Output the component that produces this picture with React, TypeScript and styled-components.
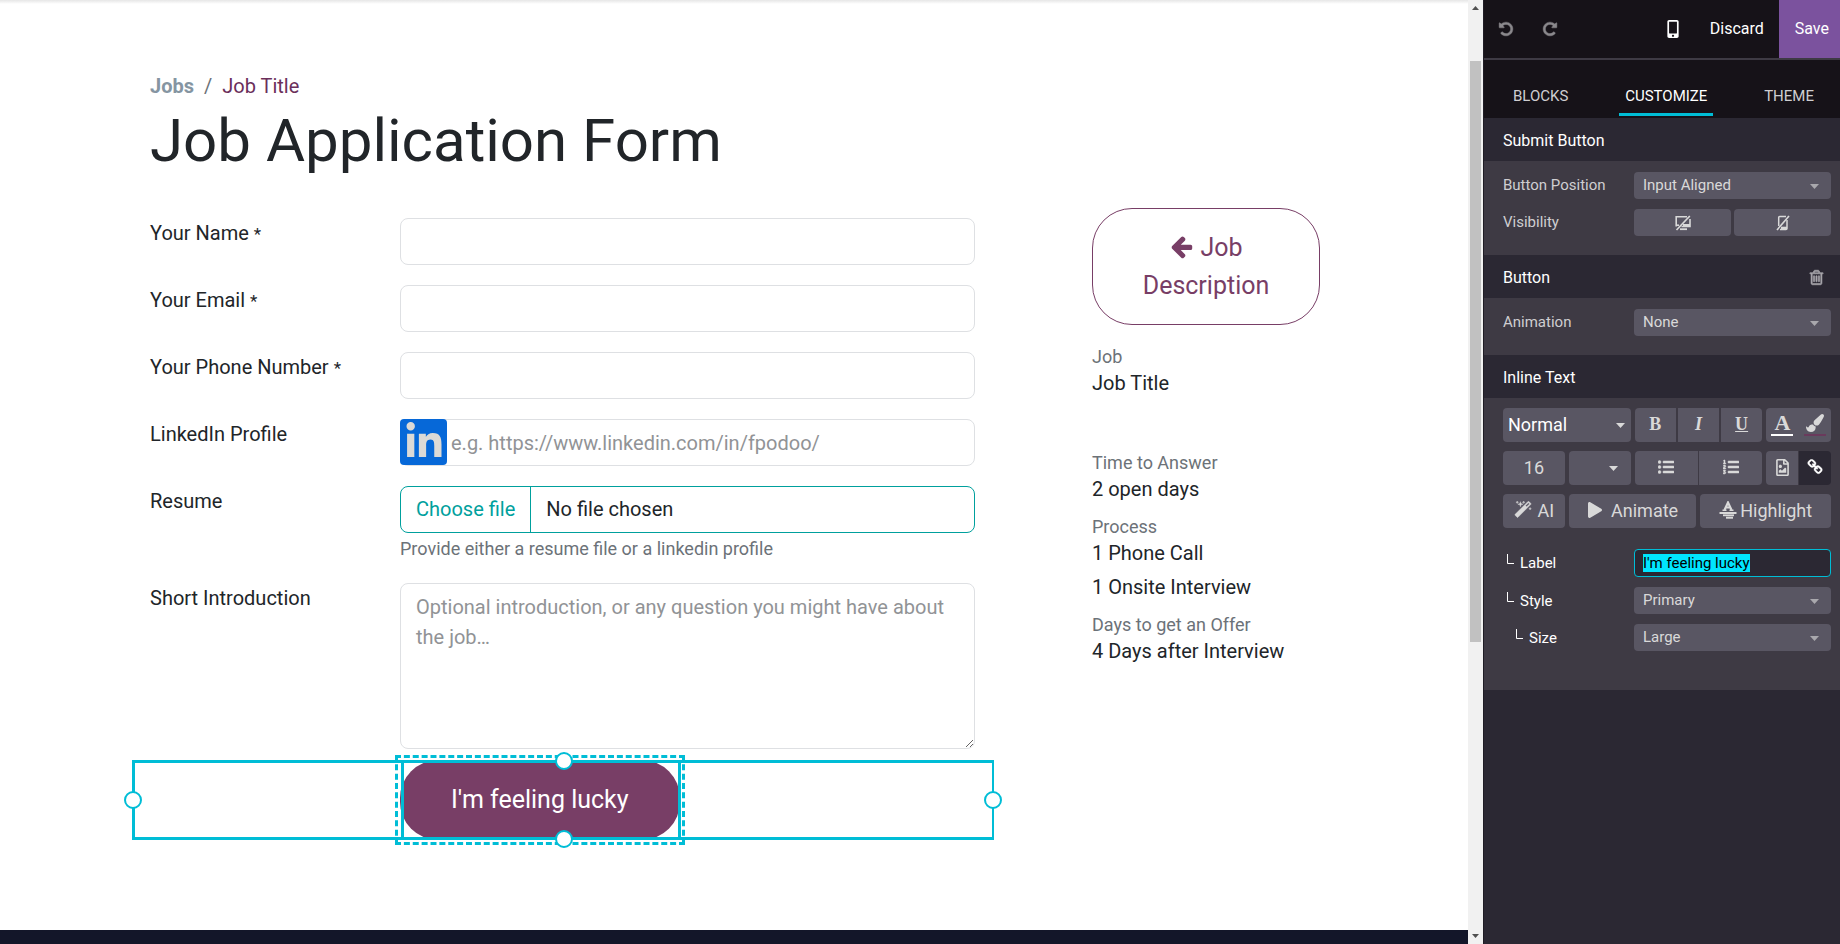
import React, { useEffect, useRef } from "react";
import styled, { createGlobalStyle, css } from "styled-components";
import {
  FaLinkedinIn,
  FaListOl,
  FaListUl,
  FaMobileAlt,
  FaPlay,
  FaRegFileImage,
} from "react-icons/fa";

const c = {
  accent: "#00bdd6",
  brand: "#783e66",
  teal: "#00a09d",
  ink: "#212529",
  muted: "#6c7278",
  border: "#dee0e3",
  dark: "#161218",
  head: "#2b2833",
  body: "#3e3a44",
  control: "#595663",
  light: "#d9d9d9",
};

const GlobalStyle = createGlobalStyle`
  *, *::before, *::after { box-sizing: border-box; }
  body { margin: 0; font-family: Roboto, sans-serif; color: ${c.ink}; background: #fff; }
  button, input, select, textarea { font-family: inherit; margin: 0; }
  button { cursor: pointer; }
  h1, h2, p, dl, dd, dt, ol { margin: 0; padding: 0; }
`;

const Layout = styled.div`
  display: flex;
  min-height: 100vh;
`;

/* ---------- Website page ---------- */

const Page = styled.main`
  flex: 1;
  min-width: 0;
  display: flex;
  flex-direction: column;
  background: linear-gradient(#e6e6e6, #fff) top / 100% 4px no-repeat #fff;
`;

const PageContent = styled.div`
  padding: 71px 148px 90px 150px;
`;

const PageFooter = styled.footer`
  flex: 1;
  min-height: 14px;
  background: #131629;
`;

const Breadcrumb = styled.ol`
  display: flex;
  gap: 10px;
  list-style: none;
  font-size: 20px;
  line-height: 30px;
  color: ${c.muted};
`;

const Crumb = styled.a<{ $strong?: boolean }>`
  color: ${(p) => (p.$strong ? "#8595a2" : "#6b2f5b")};
  font-weight: ${(p) => (p.$strong ? 700 : 400)};
  text-decoration: none;
`;

const Title = styled.h1`
  margin-top: 5px;
  font-size: 60px;
  line-height: 70px;
  font-weight: 400;
`;

const Columns = styled.div`
  display: grid;
  grid-template-columns: minmax(0, 1fr) 228px;
  column-gap: 117px;
  margin-top: 32px;
`;

const Form = styled.form`
  display: flex;
  flex-direction: column;
  gap: 20px;
  padding-top: 10px;
`;

const FormRow = styled.div`
  display: grid;
  grid-template-columns: 250px minmax(0, 1fr);
  align-items: start;
`;

const FieldLabel = styled.label`
  font-size: 20px;
  line-height: 30px;
`;

const Mark = styled.span`
  font-size: 17px;
`;

const fieldBox = css`
  display: block;
  width: 100%;
  border: 1px solid ${c.border};
  border-radius: 8px;
  background: #fff;
  font-size: 20px;
  line-height: 30px;
  color: ${c.ink};
  outline: none;
  &::placeholder {
    color: #919396;
    opacity: 1;
  }
`;

const TextField = styled.input<{ $badge?: boolean }>`
  ${fieldBox}
  height: 47px;
  padding: 0 15px 0 ${(p) => (p.$badge ? 50 : 15)}px;
`;

const TextArea = styled.textarea`
  ${fieldBox}
  height: 166px;
  padding: 8px 15px;
  resize: vertical;
`;

const BadgeField = styled.div`
  position: relative;
`;

const LinkedInBadge = styled.span`
  position: absolute;
  top: 0;
  left: 0;
  display: grid;
  place-items: center;
  width: 47px;
  height: 46px;
  border-radius: 4px;
  background: #0668d8;
  color: #dcdad6;
`;

const FilePicker = styled.label`
  position: relative;
  display: flex;
  height: 47px;
  border: 1px solid ${c.teal};
  border-radius: 8px;
  font-size: 20px;
  line-height: 45px;
`;

const FileInput = styled.input`
  position: absolute;
  inset: 0;
  width: 100%;
  opacity: 0;
`;

const FileAction = styled.span`
  padding: 0 15px;
  border-right: 1px solid ${c.teal};
  color: ${c.teal};
`;

const FileName = styled.span`
  padding-left: 15px;
`;

const HelpText = styled.p`
  margin-top: 2px;
  font-size: 18px;
  line-height: 28px;
  color: ${c.muted};
`;

const SubmitRow = styled.div`
  position: relative;
  height: 80px;
  margin-top: -9px;
  padding-left: 250px;
`;

const SubmitWrap = styled.div`
  position: relative;
  display: inline-block;
`;

const SubmitButton = styled.button`
  display: block;
  height: 80px;
  padding: 0 51px;
  border: 0;
  border-radius: 38px;
  background: ${c.brand};
  color: #fff;
  font-size: 25px;
  line-height: 38px;
`;

const RowSelection = styled.div`
  position: absolute;
  inset: 0 -19px 0 -18px;
  border: 3px solid ${c.accent};
  border-right-width: 2px;
  pointer-events: none;
`;

const ButtonSelection = styled.div`
  position: absolute;
  inset: 0 -1px 0 1px;
  border: 3px solid ${c.accent};
  pointer-events: none;
`;

const DashedSelection = styled.div`
  position: absolute;
  inset: -5px;
  border: 3px dashed ${c.accent};
  pointer-events: none;
`;

type Side = "left" | "right" | "top" | "bottom";

const Handle = styled.span<{ $side: Side }>`
  position: absolute;
  width: 18px;
  height: 18px;
  border: 2px solid ${c.accent};
  border-radius: 50%;
  background: #fff;
  transform: translate(-50%, -50%);
  top: ${(p) => (p.$side === "top" ? "-2px" : p.$side === "bottom" ? "calc(100% + 2px)" : "50%")};
  left: ${(p) => (p.$side === "left" ? "-2px" : p.$side === "right" ? "calc(100% + 1px)" : "50%")};
`;

const JobAside = styled.aside`
  font-size: 20px;
`;

const DescriptionLink = styled.a`
  display: block;
  padding: 20px 40px 19px;
  border: 1px solid ${c.brand};
  border-radius: 40px;
  color: ${c.brand};
  font-size: 25px;
  line-height: 38px;
  text-align: center;
  text-decoration: none;
  svg {
    margin-right: 6px;
    vertical-align: -3px;
  }
`;

const Facts = styled.dl`
  margin-top: 20px;
`;

const Fact = styled.div<{ $space?: number }>`
  margin-bottom: ${(p) => p.$space ?? 12}px;
`;

const FactName = styled.dt`
  font-size: 18px;
  line-height: 24px;
  color: ${c.muted};
`;

const FactValue = styled.dd`
  line-height: 28px;
  & + & {
    margin-top: 6px;
  }
`;

/* ---------- Scroll bar ---------- */

const ScrollTrack = styled.div`
  display: flex;
  flex-direction: column;
  align-items: center;
  width: 15px;
  background: #f1f1f1;
`;

const ScrollArrow = styled.svg`
  display: block;
  width: 7px;
  height: 4px;
  margin: 6px 0;
`;

const ScrollGap = styled.div<{ $grow: number }>`
  flex: ${(p) => p.$grow} 0 0;
`;

const ScrollThumb = styled.div`
  flex: 581 0 0;
  width: 11px;
  background: #c1c1c1;
`;

/* ---------- Editor panel ---------- */

const Panel = styled.aside`
  width: 357px;
  border-left: 1px solid #1f1c25;
  background: ${c.head};
  color: ${c.light};
`;

const TopBar = styled.div`
  display: flex;
  align-items: stretch;
  height: 60px;
  border-bottom: 2px solid ${c.body};
  background: ${c.dark};
`;

const IconButton = styled.button<{ $dim?: boolean }>`
  display: grid;
  place-items: center;
  width: 44px;
  padding: 0;
  border: 0;
  background: none;
  color: ${(p) => (p.$dim ? "#8a888c" : "#fff")};
`;

const Spacer = styled.div`
  flex: 1;
`;

const BarButton = styled.button<{ $primary?: boolean }>`
  padding: 0 ${(p) => (p.$primary ? 11 : 15)}px 0 ${(p) => (p.$primary ? 16 : 15)}px;
  border: 0;
  background: ${(p) => (p.$primary ? "#7b529e" : "transparent")};
  color: #fff;
  font-size: 16px;
  line-height: 24px;
`;

const Tabs = styled.div`
  display: flex;
  justify-content: space-between;
  align-items: flex-end;
  height: 58px;
  padding: 0 20px 2px 23px;
  background: ${c.dark};
`;

const Tab = styled.button<{ $active?: boolean }>`
  height: 42px;
  padding: 5px 6px 0;
  border: 0;
  border-bottom: 3px solid ${(p) => (p.$active ? c.accent : "transparent")};
  background: none;
  color: ${(p) => (p.$active ? "#fff" : "#cfced1")};
  font-size: 15px;
`;

const SectionHead = styled.h2`
  display: flex;
  align-items: center;
  justify-content: space-between;
  height: 43px;
  padding: 1px 10px 0 19px;
  background: ${c.head};
  color: #fff;
  font-size: 16px;
  font-weight: 400;
`;

const TrashButton = styled.button`
  display: grid;
  place-items: center;
  width: 28px;
  height: 28px;
  padding: 0;
  border: 0;
  background: none;
  color: #aaa8ae;
`;

const SectionBody = styled.div<{ $last?: boolean }>`
  display: flex;
  flex-direction: column;
  gap: 10px;
  padding: ${(p) => (p.$last ? "10px 9px 39px 19px" : "11px 9px 19px 19px")};
  background: ${c.body};
`;

const OptionRow = styled.div`
  display: grid;
  grid-template-columns: 131px minmax(0, 1fr);
  align-items: center;
`;

const OptionLabel = styled.label<{ $level?: number }>`
  display: flex;
  font-size: 15px;
  line-height: 20px;
  padding-left: ${(p) => (p.$level ? p.$level * 9 - 5 : 0)}px;
  padding-bottom: ${(p) => (p.$level ? 0 : 2)}px;
  color: ${(p) => (p.$level ? "#fff" : "#cfced1")};
  svg {
    margin: 1px 6px 0 0;
  }
`;

const SelectBox = styled.div<{ $right?: number }>`
  position: relative;
  svg {
    position: absolute;
    top: calc(50% - 2px);
    right: ${(p) => p.$right ?? 12}px;
    pointer-events: none;
  }
`;

const Select = styled.select<{ $tool?: boolean }>`
  display: block;
  width: 100%;
  height: ${(p) => (p.$tool ? 34 : 27)}px;
  padding: 0 ${(p) => (p.$tool ? 5 : 9)}px 2px;
  border: 0;
  border-radius: 4px;
  appearance: none;
  background: ${c.control};
  color: ${(p) => (p.$tool ? "#fff" : c.light)};
  font-size: ${(p) => (p.$tool ? 18 : 15)}px;
  outline: none;
`;

const OptionInput = styled.input`
  display: block;
  width: 100%;
  height: 28px;
  padding: 0 8px;
  border: 1px solid ${c.accent};
  border-radius: 4px;
  background: ${c.head};
  color: #fff;
  font-size: 15px;
  outline: none;
  &::selection {
    background: #00e5ff;
    color: #000;
  }
`;

const SplitPair = styled.div`
  display: grid;
  grid-template-columns: 1fr 1fr;
  gap: 3px;
`;

const ToggleButton = styled.button`
  display: grid;
  place-items: center;
  height: 27px;
  padding: 0;
  border: 0;
  border-radius: 4px;
  background: ${c.control};
  color: ${c.light};
`;

const Toolbar = styled.div`
  display: flex;
  flex-direction: column;
  gap: 9px;
  margin-bottom: 11px;
`;

const ToolRow = styled.div<{ $cols: string }>`
  display: grid;
  grid-template-columns: ${(p) => p.$cols};
  gap: 4px;
`;

const ToolGroup = styled.div<{ $gap: number }>`
  display: flex;
  gap: ${(p) => p.$gap}px;
  border-radius: 4px;
  overflow: hidden;
`;

const ToolButton = styled.button<{ $active?: boolean; $gap?: number }>`
  flex: 1;
  display: flex;
  align-items: center;
  justify-content: center;
  gap: ${(p) => p.$gap ?? 0}px;
  min-width: 0;
  height: 34px;
  padding: 0 0 2px;
  border: 0;
  background: ${(p) => (p.$active ? c.head : c.control)};
  color: ${(p) => (p.$active ? "#fff" : c.light)};
  font-size: 18px;
`;

const SoloButton = styled(ToolButton)`
  border-radius: 4px;
`;

const SizeField = styled.input`
  width: 100%;
  height: 34px;
  padding: 0 0 2px;
  border: 0;
  border-radius: 4px;
  background: ${c.control};
  color: ${c.light};
  font-size: 18px;
  text-align: center;
  outline: none;
`;

const Letter = styled.span<{ $italic?: boolean; $underline?: boolean; $large?: boolean }>`
  font-family: "Liberation Serif", serif;
  font-size: ${(p) => (p.$large ? 22 : 18)}px;
  line-height: 20px;
  font-weight: 700;
  font-style: ${(p) => (p.$italic ? "italic" : "normal")};
  text-decoration: ${(p) => (p.$underline ? "underline" : "none")};
`;

const Swatch = styled.span<{ $color: string }>`
  display: grid;
  place-items: center;
  width: 22px;
  height: 24px;
  border-bottom: 2px solid ${(p) => p.$color};
`;

/* ---------- Small drawings ---------- */

const glyphs = {
  arrowLeft:
    "M1664 896v128q0 53-32.500 90.500t-84.500 37.500h-704l293 294q38 36 38 90t-38 90l-75 76q-37 37-90 37-52 0-91-37l-651-652q-37-37-37-90 0-52 37-91l651-650q38-38 91-38 52 0 90 38l75 74q38 38 38 91t-38 91l-293 293h704q52 0 84.500 37.500t32.500 90.500z",
  undo: "M1664 896q0 156-61 298t-164 245-245 164-298 61q-172 0-327-72.5t-264-204.5q-7-10-6.500-22.500t8.500-20.500l137-138q10-9 25-9 16 2 23 12 73 95 179 147t225 52q104 0 198.500-40.500t163.500-109.500 109.500-163.500 40.500-198.500-40.500-198.500-109.500-163.500-163.500-109.500-198.500-40.500q-98 0-188 35.500t-160 101.500l137 138q31 30 14 69-17 40-59 40h-448q-26 0-45-19t-19-45v-448q0-42 40-59 39-17 69 14l130 129q107-101 244.500-156.500t284.500-55.500q156 0 298 61t245 164 164 245 61 298z",
  trash:
    "M704 736v576q0 14-9 23t-23 9h-64q-14 0-23-9t-9-23v-576q0-14 9-23t23-9h64q14 0 23 9t9 23zm256 0v576q0 14-9 23t-23 9h-64q-14 0-23-9t-9-23v-576q0-14 9-23t23-9h64q14 0 23 9t9 23zm256 0v576q0 14-9 23t-23 9h-64q-14 0-23-9t-9-23v-576q0-14 9-23t23-9h64q14 0 23 9t9 23zm128 724v-948h-896v948q0 22 7 40.500t14.500 27 10.500 8.500h832q3 0 10.500-8.500t14.500-27 7-40.500zm-672-1076h448l-48-117q-7-9-17-11h-317q-10 2-17 11zm928 32v64q0 14-9 23t-23 9h-96v948q0 83-47 143.500t-113 60.500h-832q-66 0-113-58.500t-47-141.500v-952h-96q-14 0-23-9t-9-23v-64q0-14 9-23t23-9h309l70-167q15-37 54-63t79-26h320q40 0 79 26t54 63l70 167h309q14 0 23 9t9 23z",
  link: "M1520 1216q0-40-28-68l-208-208q-28-28-68-28-42 0-72 32 3 3 19 18.500t21.500 21.500 15 19 13 25.500 3.500 27.500q0 40-28 68t-68 28q-15 0-27.500-3.500t-25.500-13-19-15-21.500-21.500-18.500-19q-33 31-33 73 0 40 28 68l206 207q27 27 68 27 40 0 68-26l147-146q28-28 28-67zm-703-705q0-40-28-68l-206-207q-28-28-68-28-39 0-68 27l-147 146q-28 28-28 67 0 40 28 68l208 208q27 27 68 27 42 0 72-31-3-3-19-18.500t-21.500-21.500-15-19-13-25.500-3.500-27.500q0-40 28-68t68-28q15 0 27.500 3.500t25.500 13 19 15 21.500 21.500 18.500 19q33-31 33-73zm895 705q0 120-85 203l-147 146q-83 83-203 83-121 0-204-85l-206-207q-83-83-83-203 0-123 88-209l-88-88q-86 88-208 88-120 0-204-84l-208-208q-84-84-84-204t85-203l147-146q83-83 203-83 121 0 204 85l206 207q83 83 83 203 0 123-88 209l88 88q86-88 208-88 120 0 204 84l208 208q84 84 84 204z",
  wand: "M1254 581l293-293-107-107-293 293zm447-293q0 27-18 45l-1286 1286q-18 18-45 18t-45-18l-198-198q-18-18-18-45t18-45l1286-1286q18-18 45-18t45 18l198 198q18 18 18 45zm-1351-190l98 30-98 30-30 98-30-98-98-30 98-30 30-98zm350 162l196 60-196 60-60 196-60-196-196-60 196-60 60-196zm930 478l98 30-98 30-30 98-30-98-98-30 98-30 30-98zm-640-640l98 30-98 30-30 98-30-98-98-30 98-30 30-98z",
  brush:
    "M1615 0q70 0 122.500 46.500t52.500 116.500q0 63-45 151-332 629-465 752-97 91-218 91-126 0-216.500-92.500t-90.500-219.500q0-128 92-212l638-579q59-54 130-54zm-909 1034q39 76 106.500 130t150.500 76l1 71q4 213-129.500 347t-348.500 134q-123 0-218-46.500t-152.500-127.500-86.500-183-29-220q7 5 41 30t62 44.500 59 36.500 46 17q41 0 55-37 25-66 57.500-112.500t69.500-76 88-47.500 103-25.500 125-10.500z",
};

interface GlyphProps {
  name: keyof typeof glyphs;
  size: number;
  mirrored?: boolean;
  stroke?: number;
}

const Glyph = ({ name, size, mirrored, stroke = 0 }: GlyphProps) => (
  <svg
    width={size}
    height={size}
    viewBox="0 0 1792 1792"
    fill="currentColor"
    stroke={stroke ? "currentColor" : "none"}
    strokeWidth={stroke}
    aria-hidden="true"
  >
    <path d={glyphs[name]} transform={mirrored ? "translate(1792 0) scale(-1 1)" : undefined} />
  </svg>
);

const Caret = ({ color = "#a9a8ad" }: { color?: string }) => (
  <svg width="9" height="5" viewBox="0 0 9 5" fill={color} aria-hidden="true">
    <path d="M0 0h9L4.500 5z" />
  </svg>
);

const Corner = () => (
  <svg width="7" height="11" viewBox="0 0 7 11" fill="none" stroke="#fff" aria-hidden="true">
    <path d="M0.500 0V9.500H7" />
  </svg>
);

const DesktopOff = () => (
  <svg width="16" height="16" viewBox="0 0 16 16" fill="none" stroke="currentColor" aria-hidden="true">
    <path d="M1.200 11.500V1.800H12" strokeWidth="1.600" />
    <path d="M15 4v7.500H6.500" strokeWidth="1.600" />
    <path d="M8 10h7" strokeWidth="2" />
    <path d="M1 10.200h3" strokeWidth="1.600" />
    <path d="M5 14.200h7" strokeWidth="1.800" />
    <path d="M1.500 15L14.800 1" strokeWidth="1.700" />
  </svg>
);

const MobileOff = () => (
  <svg width="14" height="16" viewBox="0 0 14 16" fill="none" stroke="currentColor" aria-hidden="true">
    <path d="M2.700 11V2.500a1 1 0 0 1 1-1H10" strokeWidth="1.500" />
    <path d="M11 5v8.500a1 1 0 0 1-1 1H4" strokeWidth="1.500" />
    <path d="M5 13h6" strokeWidth="2.600" />
    <path d="M1 15L13 1" strokeWidth="1.600" />
  </svg>
);

const HighlightMark = () => (
  <svg width="18" height="18" viewBox="0 0 18 18" fill="none" stroke="currentColor" aria-hidden="true">
    <path d="M5.500 9L9 1.500L12.500 9M6.500 6.500h5" strokeWidth="2.200" />
    <path d="M3.500 9.300h4M10.500 9.300h4" strokeWidth="1.400" />
    <path d="M0.500 12h17" strokeWidth="2" />
    <path d="M4 14.300h11" strokeWidth="1.800" />
    <path d="M7 16.700h7" strokeWidth="2" />
  </svg>
);

/* ---------- Parts ---------- */

interface OptionSelectProps {
  id: string;
  label: string;
  value: string;
  level?: number;
}

const OptionSelect = ({ id, label, value, level }: OptionSelectProps) => (
  <OptionRow>
    <OptionLabel htmlFor={id} $level={level}>
      {level ? <Corner /> : null}
      {label}
    </OptionLabel>
    <SelectBox>
      <Select id={id} defaultValue={value}>
        <option>{value}</option>
      </Select>
      <Caret />
    </SelectBox>
  </OptionRow>
);

const requiredFields = [
  { id: "name", label: "Your Name", type: "text" },
  { id: "email", label: "Your Email", type: "email" },
  { id: "phone", label: "Your Phone Number", type: "tel" },
];

const JobPage = () => (
  <Page>
    <PageContent>
      <nav aria-label="Breadcrumb">
        <Breadcrumb>
          <li>
            <Crumb href="#jobs" $strong>
              Jobs
            </Crumb>
          </li>
          <li>/</li>
          <li>
            <Crumb href="#job">Job Title</Crumb>
          </li>
        </Breadcrumb>
      </nav>
      <Title>Job Application Form</Title>
      <Columns>
        <Form onSubmit={(e) => e.preventDefault()}>
          {requiredFields.map((f) => (
            <FormRow key={f.id}>
              <FieldLabel htmlFor={f.id}>
                {f.label} <Mark>*</Mark>
              </FieldLabel>
              <TextField id={f.id} type={f.type} />
            </FormRow>
          ))}
          <FormRow>
            <FieldLabel htmlFor="linkedin">LinkedIn Profile</FieldLabel>
            <BadgeField>
              <TextField id="linkedin" $badge placeholder="e.g. https://www.linkedin.com/in/fpodoo/" />
              <LinkedInBadge>
                <FaLinkedinIn size={40} />
              </LinkedInBadge>
            </BadgeField>
          </FormRow>
          <FormRow>
            <FieldLabel htmlFor="resume">Resume</FieldLabel>
            <div>
              <FilePicker>
                <FileInput id="resume" type="file" />
                <FileAction>Choose file</FileAction>
                <FileName>No file chosen</FileName>
              </FilePicker>
              <HelpText>Provide either a resume file or a linkedin profile</HelpText>
            </div>
          </FormRow>
          <FormRow>
            <FieldLabel htmlFor="intro">Short Introduction</FieldLabel>
            <TextArea
              id="intro"
              placeholder="Optional introduction, or any question you might have about the job…"
            />
          </FormRow>
          <SubmitRow>
            <SubmitWrap>
              <SubmitButton type="submit">I'm feeling lucky</SubmitButton>
              <DashedSelection />
              <ButtonSelection />
            </SubmitWrap>
            <RowSelection>
              <Handle $side="left" />
              <Handle $side="right" />
              <Handle $side="top" />
              <Handle $side="bottom" />
            </RowSelection>
          </SubmitRow>
        </Form>
        <JobAside>
          <DescriptionLink href="#description">
            <Glyph name="arrowLeft" size={25} />
            Job Description
          </DescriptionLink>
          <Facts>
            <Fact $space={54}>
              <FactName>Job</FactName>
              <FactValue>Job Title</FactValue>
            </Fact>
            <Fact>
              <FactName>Time to Answer</FactName>
              <FactValue>2 open days</FactValue>
            </Fact>
            <Fact>
              <FactName>Process</FactName>
              <FactValue>1 Phone Call</FactValue>
              <FactValue>1 Onsite Interview</FactValue>
            </Fact>
            <Fact>
              <FactName>Days to get an Offer</FactName>
              <FactValue>4 Days after Interview</FactValue>
            </Fact>
          </Facts>
        </JobAside>
      </Columns>
    </PageContent>
    <PageFooter />
  </Page>
);

const EditorPanel = () => {
  const labelInput = useRef<HTMLInputElement>(null);

  useEffect(() => {
    labelInput.current?.focus();
    labelInput.current?.select();
  }, []);

  return (
    <Panel>
      <TopBar>
        <IconButton $dim aria-label="Undo">
          <Glyph name="undo" size={16} stroke={50} />
        </IconButton>
        <IconButton $dim aria-label="Redo">
          <Glyph name="undo" size={16} stroke={50} mirrored />
        </IconButton>
        <Spacer />
        <IconButton aria-label="Mobile preview">
          <FaMobileAlt size={18} />
        </IconButton>
        <BarButton>Discard</BarButton>
        <BarButton $primary>Save</BarButton>
      </TopBar>
      <Tabs role="tablist">
        <Tab role="tab">BLOCKS</Tab>
        <Tab role="tab" $active aria-selected="true">
          CUSTOMIZE
        </Tab>
        <Tab role="tab">THEME</Tab>
      </Tabs>

      <SectionHead>Submit Button</SectionHead>
      <SectionBody>
        <OptionSelect id="position" label="Button Position" value="Input Aligned" />
        <OptionRow>
          <OptionLabel as="span">Visibility</OptionLabel>
          <SplitPair>
            <ToggleButton aria-label="Hide on desktop">
              <DesktopOff />
            </ToggleButton>
            <ToggleButton aria-label="Hide on mobile">
              <MobileOff />
            </ToggleButton>
          </SplitPair>
        </OptionRow>
      </SectionBody>

      <SectionHead>
        Button
        <TrashButton aria-label="Remove button">
          <Glyph name="trash" size={17} stroke={60} />
        </TrashButton>
      </SectionHead>
      <SectionBody>
        <OptionSelect id="animation" label="Animation" value="None" />
      </SectionBody>

      <SectionHead>Inline Text</SectionHead>
      <SectionBody $last>
        <Toolbar>
          <ToolRow $cols="128fr 128fr 65fr">
            <SelectBox $right={6}>
              <Select $tool aria-label="Text style" defaultValue="Normal">
                <option>Normal</option>
              </Select>
              <Caret color={c.light} />
            </SelectBox>
            <ToolGroup $gap={2}>
              <ToolButton aria-label="Bold">
                <Letter>B</Letter>
              </ToolButton>
              <ToolButton aria-label="Italic">
                <Letter $italic>I</Letter>
              </ToolButton>
              <ToolButton aria-label="Underline">
                <Letter $underline>U</Letter>
              </ToolButton>
            </ToolGroup>
            <ToolGroup $gap={0}>
              <ToolButton aria-label="Text color">
                <Swatch $color="#fff">
                  <Letter $large>A</Letter>
                </Swatch>
              </ToolButton>
              <ToolButton aria-label="Background color">
                <Swatch $color="#6a3a5c">
                  <Glyph name="brush" size={18} />
                </Swatch>
              </ToolButton>
            </ToolGroup>
          </ToolRow>
          <ToolRow $cols="62fr 62fr 128fr 65fr">
            <SizeField aria-label="Font size" defaultValue="16" />
            <SelectBox $right={13}>
              <Select $tool aria-label="Font size presets" defaultValue="">
                <option value=""></option>
              </Select>
              <Caret color={c.light} />
            </SelectBox>
            <ToolGroup $gap={1}>
              <ToolButton aria-label="Bulleted list">
                <FaListUl size={16} stroke="currentColor" strokeWidth={16} />
              </ToolButton>
              <ToolButton aria-label="Numbered list">
                <FaListOl size={16} stroke="currentColor" strokeWidth={16} />
              </ToolButton>
            </ToolGroup>
            <ToolGroup $gap={1}>
              <ToolButton aria-label="Image">
                <FaRegFileImage size={17} />
              </ToolButton>
              <ToolButton $active aria-label="Link">
                <Glyph name="link" size={16} stroke={40} />
              </ToolButton>
            </ToolGroup>
          </ToolRow>
          <ToolRow $cols="62fr 128fr 131fr">
            <SoloButton $gap={6}>
              <Glyph name="wand" size={18} stroke={40} />
              AI
            </SoloButton>
            <SoloButton $gap={8}>
              <FaPlay size={16} />
              Animate
            </SoloButton>
            <SoloButton $gap={3}>
              <HighlightMark />
              Highlight
            </SoloButton>
          </ToolRow>
        </Toolbar>
        <OptionRow>
          <OptionLabel htmlFor="label" $level={1}>
            <Corner />
            Label
          </OptionLabel>
          <OptionInput id="label" ref={labelInput} defaultValue="I'm feeling lucky" />
        </OptionRow>
        <OptionSelect id="style" label="Style" value="Primary" level={1} />
        <OptionSelect id="size" label="Size" value="Large" level={2} />
      </SectionBody>
    </Panel>
  );
};

export default function App() {
  return (
    <Layout>
      <GlobalStyle />
      <JobPage />
      <ScrollTrack aria-hidden="true">
        <ScrollArrow viewBox="0 0 7 4" fill="#505050">
          <path d="M0 4h7L3.500 0z" />
        </ScrollArrow>
        <ScrollGap $grow={45} />
        <ScrollThumb />
        <ScrollGap $grow={286} />
        <ScrollArrow viewBox="0 0 7 4" fill="#505050">
          <path d="M0 0h7L3.500 4z" />
        </ScrollArrow>
      </ScrollTrack>
      <EditorPanel />
    </Layout>
  );
}
